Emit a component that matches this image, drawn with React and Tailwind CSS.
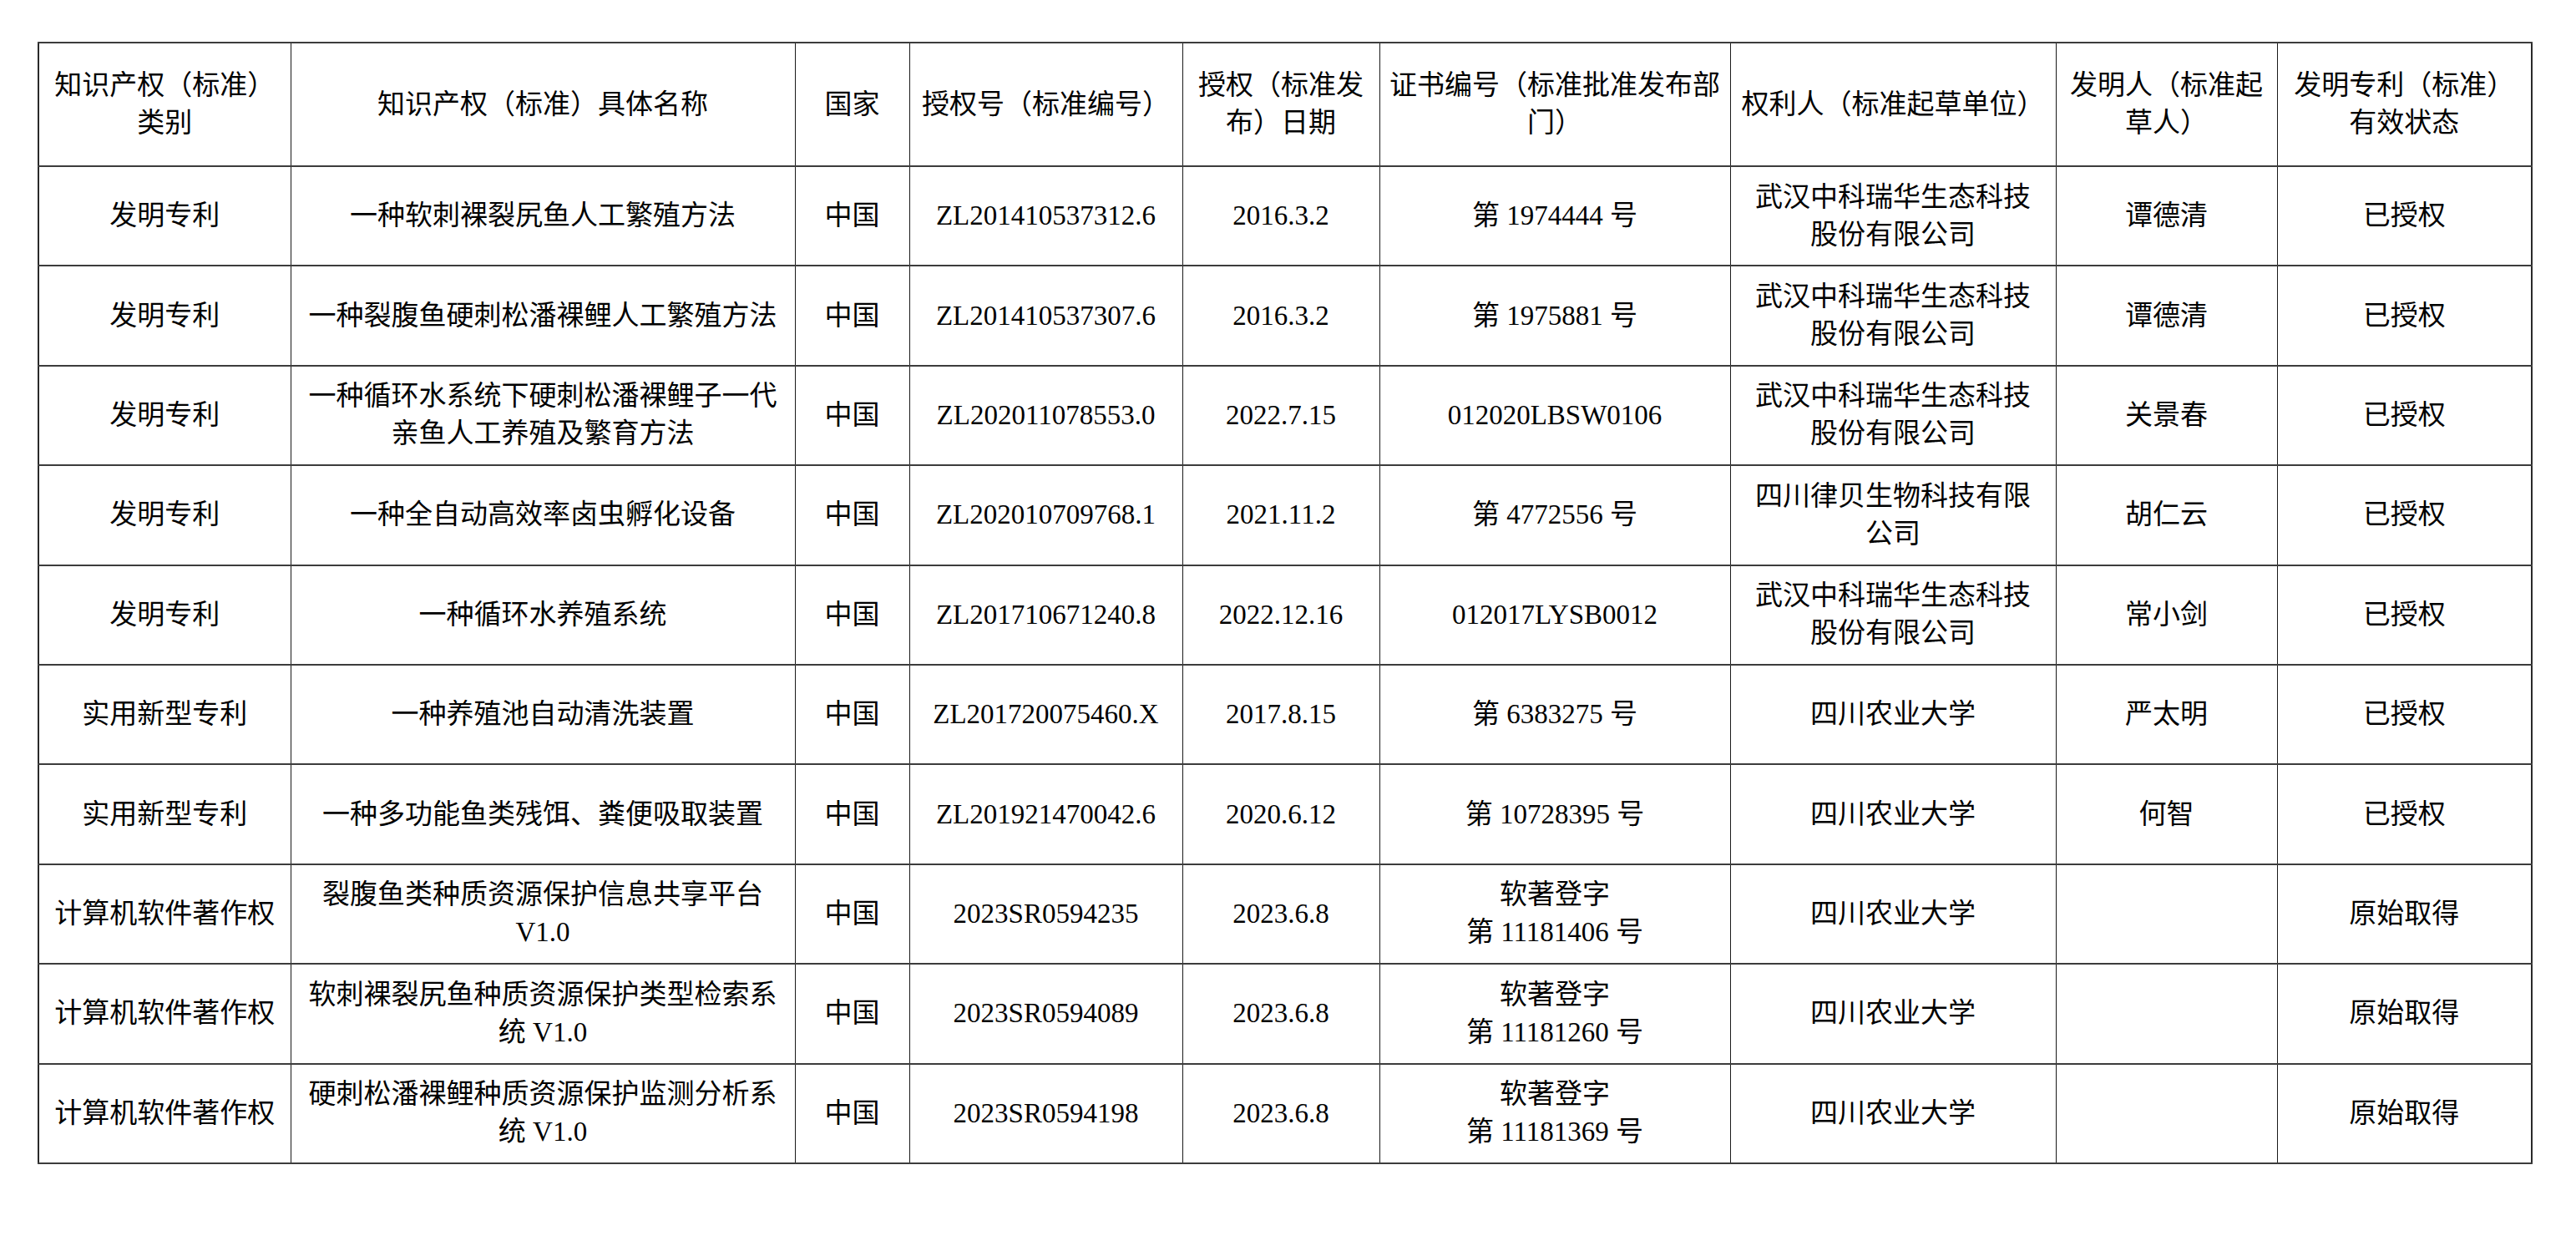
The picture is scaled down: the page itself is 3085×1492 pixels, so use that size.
const head = [
  ['知识产权（标准）', '类别'],
  ['知识产权（标准）具体名称'],
  ['国家'],
  ['授权号（标准编号）'],
  ['授权（标准发', '布）日期'],
  ['证书编号（标准批准发布部', '门）'],
  ['权利人（标准起草单位）'],
  ['发明人（标准起', '草人）'],
  ['发明专利（标准）', '有效状态'],
]

const widths = [302, 604, 137, 327, 236, 420, 390, 265, 305]

const wuhan = ['武汉中科瑞华生态科技', '股份有限公司']
const sicau = ['四川农业大学']

const rows = [
  [['发明专利'], ['一种软刺裸裂尻鱼人工繁殖方法'], ['中国'], ['ZL201410537312.6'], ['2016.3.2'], ['第 1974444 号'], wuhan, ['谭德清'], ['已授权']],
  [['发明专利'], ['一种裂腹鱼硬刺松潘裸鲤人工繁殖方法'], ['中国'], ['ZL201410537307.6'], ['2016.3.2'], ['第 1975881 号'], wuhan, ['谭德清'], ['已授权']],
  [['发明专利'], ['一种循环水系统下硬刺松潘裸鲤子一代', '亲鱼人工养殖及繁育方法'], ['中国'], ['ZL202011078553.0'], ['2022.7.15'], ['012020LBSW0106'], wuhan, ['关景春'], ['已授权']],
  [['发明专利'], ['一种全自动高效率卤虫孵化设备'], ['中国'], ['ZL202010709768.1'], ['2021.11.2'], ['第 4772556 号'], ['四川律贝生物科技有限', '公司'], ['胡仁云'], ['已授权']],
  [['发明专利'], ['一种循环水养殖系统'], ['中国'], ['ZL201710671240.8'], ['2022.12.16'], ['012017LYSB0012'], wuhan, ['常小剑'], ['已授权']],
  [['实用新型专利'], ['一种养殖池自动清洗装置'], ['中国'], ['ZL201720075460.X'], ['2017.8.15'], ['第 6383275 号'], sicau, ['严太明'], ['已授权']],
  [['实用新型专利'], ['一种多功能鱼类残饵、粪便吸取装置'], ['中国'], ['ZL201921470042.6'], ['2020.6.12'], ['第 10728395 号'], sicau, ['何智'], ['已授权']],
  [['计算机软件著作权'], ['裂腹鱼类种质资源保护信息共享平台', 'V1.0'], ['中国'], ['2023SR0594235'], ['2023.6.8'], ['软著登字', '第 11181406 号'], sicau, [], ['原始取得']],
  [['计算机软件著作权'], ['软刺裸裂尻鱼种质资源保护类型检索系', '统 V1.0'], ['中国'], ['2023SR0594089'], ['2023.6.8'], ['软著登字', '第 11181260 号'], sicau, [], ['原始取得']],
  [['计算机软件著作权'], ['硬刺松潘裸鲤种质资源保护监测分析系', '统 V1.0'], ['中国'], ['2023SR0594198'], ['2023.6.8'], ['软著登字', '第 11181369 号'], sicau, [], ['原始取得']],
]

const Cell = ({ lines }) => (
  <td className="border-x border-y-2 border-x-[#1a1a1a] border-y-[#3c3c3c] px-1 text-center align-middle">
    {lines.map((l, i) => (
      <div key={i} className="whitespace-nowrap leading-[45px]">{l}</div>
    ))}
  </td>
)

export default function App() {
  return (
    <div className="h-[1492px] w-[3085px] overflow-hidden bg-white pt-[50px] pl-[45px]">
      <table
        className="table-fixed border-collapse border-2 border-[#2a2a2a] text-[33px] text-black"
        style={{ fontFamily: '"Liberation Serif", "Noto Sans CJK SC", serif' }}
      >
        <colgroup>
          {widths.map((w, i) => (
            <col key={i} style={{ width: w }} />
          ))}
        </colgroup>
        <tbody>
          <tr className="h-[148px]">
            {head.map((c, i) => <Cell key={i} lines={c} />)}
          </tr>
          {rows.map((r, i) => (
            <tr key={i} className="h-[119.4px]">
              {r.map((c, j) => <Cell key={j} lines={c} />)}
            </tr>
          ))}
        </tbody>
      </table>
    </div>
  )
}
